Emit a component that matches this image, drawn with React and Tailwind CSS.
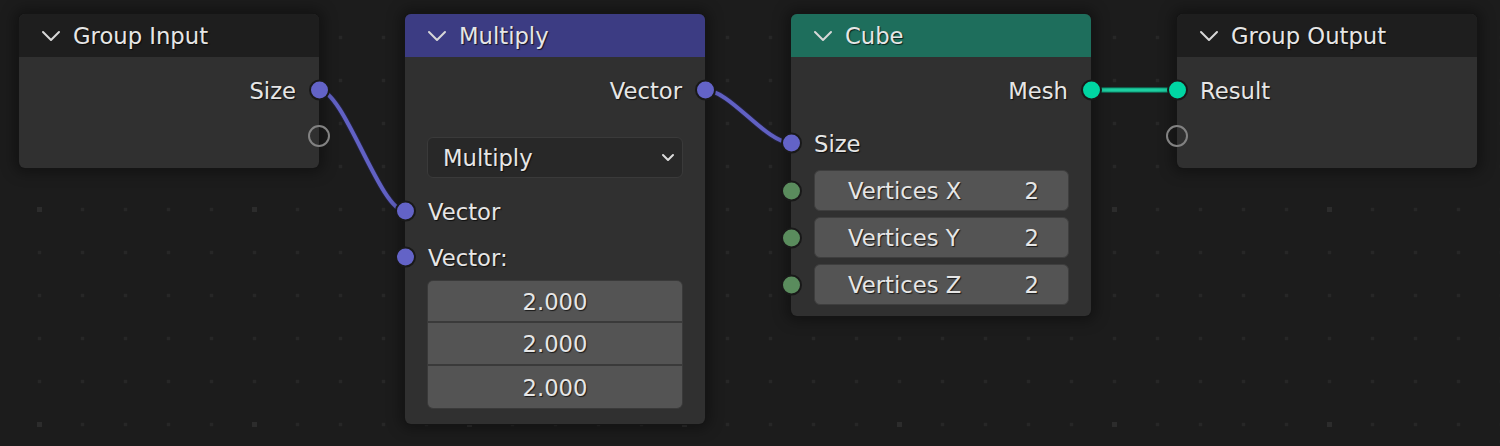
import React from "react";

const TXT = "text-[#e6e6e6] [text-shadow:1px_1px_1px_rgba(0,0,0,0.7)] text-[22.7px] leading-none translate-y-[1px]";

function Chevron({ className = "" }) {
  return (
    <svg width="20" height="12" viewBox="0 0 20 12" className={className}>
      <path d="M2 2 L10 10 L18 2" fill="none" stroke="#d8d8d8" strokeWidth="2" strokeLinecap="round" strokeLinejoin="round" />
    </svg>
  );
}

function SmallChevron() {
  return (
    <svg width="14" height="9" viewBox="0 0 14 9">
      <path d="M2 2 L7 7 L12 2" fill="none" stroke="#dcdcdc" strokeWidth="2" strokeLinecap="round" strokeLinejoin="round" />
    </svg>
  );
}

function Socket({ side, color, empty }) {
  if (empty) {
    const pos = side === "right" ? "right-[-11px]" : "left-[-11px]";
    return (
      <span className={`absolute ${pos} top-1/2 -translate-y-1/2 w-[22px] h-[22px] rounded-full border-2 border-[#828282]`} />
    );
  }
  const pos = side === "right" ? "right-[-10.5px]" : "left-[-10.5px]";
  return (
    <span
      className={`absolute ${pos} top-1/2 -translate-y-1/2 w-[21px] h-[21px] rounded-full border-2 border-[#191919]`}
      style={{ backgroundColor: color }}
    />
  );
}

function Header({ title, bg }) {
  return (
    <div className={`h-[43px] rounded-t-[6px] flex items-center pl-[22px] ${bg}`}>
      <Chevron />
      <span className={`ml-[12px] ${TXT}`}>{title}</span>
    </div>
  );
}

function Node({ children }) {
  return (
    <div className="w-[300px] shrink-0 rounded-[6px] bg-[#303030] shadow-[0_0_0_1px_#151515,0_0_14px_5px_rgba(0,0,0,0.35)]">
      {children}
    </div>
  );
}

function Row({ children, align = "left", className = "h-[46px]" }) {
  return (
    <div className={`relative flex items-center px-[23px] ${align === "right" ? "justify-end" : "justify-start"} ${className}`}>
      {children}
    </div>
  );
}

const VEC = "#6363c7";
const GEO = "#00d6a3";
const INT = "#5a8c5d";

function Grid() {
  const dots = [];
  for (let i = 0; i < 36; i++) {
    for (let j = -1; j < 11; j++) {
      const cx = 39.5 + 43 * i;
      const cy = 37.5 + 43 * j;
      const major = i % 5 === 0 && ((j - 4) % 5 + 5) % 5 === 0;
      const s = major ? 5 : 3.5;
      dots.push(
        <rect key={`${i}-${j}`} x={cx - s / 2} y={cy - s / 2} width={s} height={s} fill={major ? "#2c2c2c" : "#272727"} />
      );
    }
  }
  return dots;
}

export default function App() {
  return (
    <div className="relative w-[1500px] h-[446px] overflow-hidden bg-[#1c1c1c] font-['DejaVu_Sans',sans-serif]">
      <svg className="absolute inset-0" width="1500" height="446">
        <Grid />
        <g fill="none" strokeLinecap="round">
          <path d="M319 90 C344 90 380 211 405 211" stroke="#222238" strokeWidth="6" />
          <path d="M319 90 C344 90 380 211 405 211" stroke="#6161c4" strokeWidth="4" />
          <path d="M705 90 C730 90 766 143 791 143" stroke="#222238" strokeWidth="6" />
          <path d="M705 90 C730 90 766 143 791 143" stroke="#6161c4" strokeWidth="4" />
          <path d="M1091 90 L1177 90" stroke="#0f5e4b" strokeWidth="6" />
          <path d="M1091 90 L1177 90" stroke="#1ccfa1" strokeWidth="3.5" />
        </g>
      </svg>

      <div className="relative flex items-start gap-[86px] pt-[14px] pl-[19px]">
        {/* Group Input */}
        <Node>
          <Header title="Group Input" bg="bg-[#1e1e1e]" />
          <div className="pt-[10px] pb-[9px]">
            <Row align="right">
              <span className={TXT}>Size</span>
              <Socket side="right" color={VEC} />
            </Row>
            <Row align="right">
              <Socket side="right" empty />
            </Row>
          </div>
        </Node>

        {/* Multiply */}
        <Node>
          <Header title="Multiply" bg="bg-[#3c3c83]" />
          <div className="pt-[10px] pb-[15px]">
            <Row align="right">
              <span className={TXT}>Vector</span>
              <Socket side="right" color={VEC} />
            </Row>
            <div className="mt-[24px] mx-[22px] h-[41px] rounded-[6px] bg-[#282828] border border-[#3a3a3a] flex items-center justify-between pl-[15px] pr-[7px]">
              <span className={TXT}>Multiply</span>
              <SmallChevron />
            </div>
            <Row className="h-[46px] mt-[10px]">
              <Socket side="left" color={VEC} />
              <span className={TXT}>Vector</span>
            </Row>
            <Row className="h-[46px]">
              <Socket side="left" color={VEC} />
              <span className={TXT}>Vector:</span>
            </Row>
            <div className="mx-[22px] rounded-[6px] overflow-hidden border border-[#3a3a3a] bg-[#3a3a3a] flex flex-col gap-[2px]">
              {["h-[40px]", "h-[41px]", "h-[42px]"].map((h, i) => (
                <div key={i} className={`${h} bg-[#545454] flex items-center justify-center`}>
                  <span className={TXT}>2.000</span>
                </div>
              ))}
            </div>
          </div>
        </Node>

        {/* Cube */}
        <Node>
          <Header title="Cube" bg="bg-[#1e6e5c]" />
          <div className="pt-[10px] pb-[11px]">
            <Row align="right">
              <span className={TXT}>Mesh</span>
              <Socket side="right" color={GEO} />
            </Row>
            <Row className="h-[46px] mt-[7px]">
              <Socket side="left" color={VEC} />
              <span className={TXT}>Size</span>
            </Row>
            <div className="mt-[4px] flex flex-col gap-[6px]">
              {["X", "Y", "Z"].map((a) => (
                <div key={a} className="relative h-[41px]">
                  <Socket side="left" color={INT} />
                  <div className="ml-[23px] mr-[22px] h-full rounded-[6px] bg-[#545454] border border-[#3e3e3e] flex items-center justify-between pl-[33px] pr-[29px]">
                    <span className={TXT}>Vertices {a}</span>
                    <span className={TXT}>2</span>
                  </div>
                </div>
              ))}
            </div>
          </div>
        </Node>

        {/* Group Output */}
        <Node>
          <Header title="Group Output" bg="bg-[#1e1e1e]" />
          <div className="pt-[10px] pb-[9px]">
            <Row>
              <Socket side="left" color={GEO} />
              <span className={TXT}>Result</span>
            </Row>
            <Row>
              <Socket side="left" empty />
            </Row>
          </div>
        </Node>
      </div>
    </div>
  );
}
